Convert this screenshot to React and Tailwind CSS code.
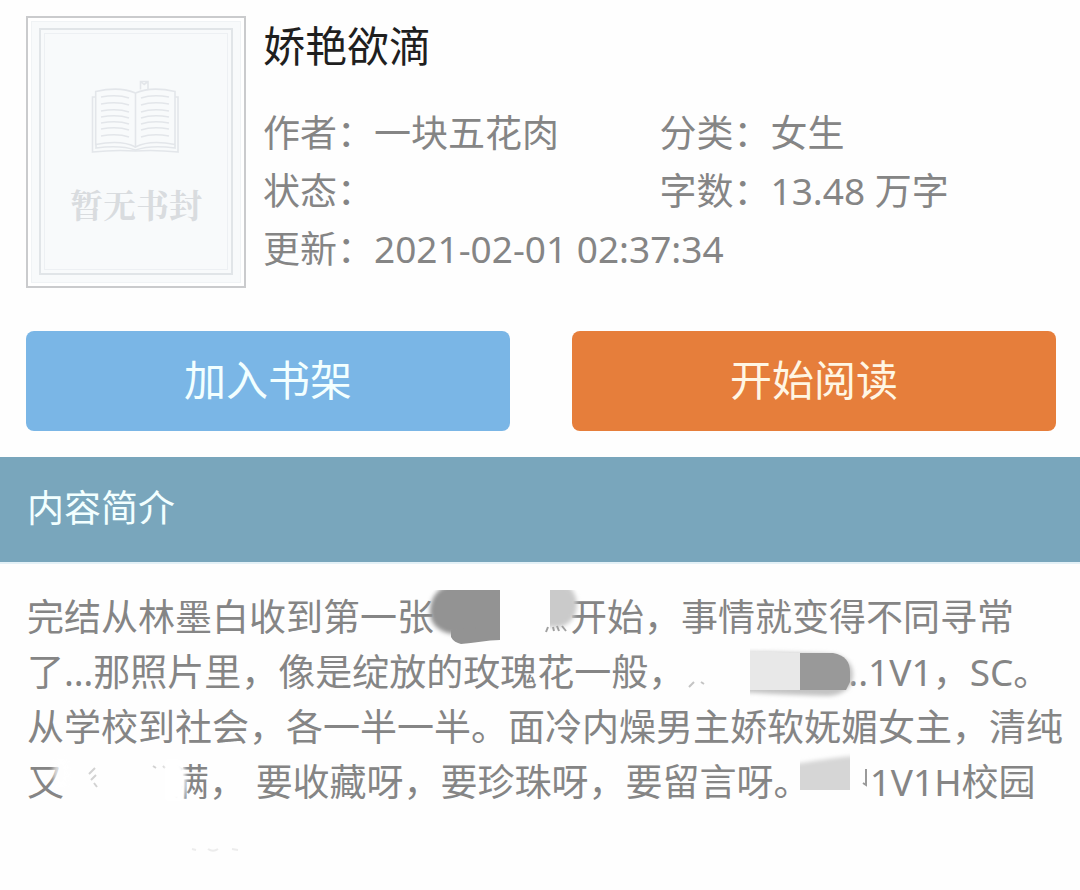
/* ── Book data ── */
const BOOK = {
  title: '娇艳欲滴',
  intro: '内容简介',
  meta: [
    { label: '作者', value: '一块五花肉' },
    { label: '分类', value: '女生' },
    { label: '状态', value: '' },
    { label: '字数', value: '13.48 万字' },
    { label: '更新', value: '2021-02-01 02:37:34', wide: true },
  ],
};

const PAGE_LINES = [16, 23, 30, 36, 42, 48, 55];

/* ── Open book drawing on the placeholder cover ── */
const BookIcon = () => (
  <svg
    viewBox="0 0 90 74"
    className="w-[90px] h-[74px]"
    fill="none"
    stroke="#e3e6ea"
    strokeWidth="1.6"
    aria-hidden="true"
  >
    <path d="M4.500 17H1.500v55c14-1.500 28-2 43-1 14-1 28-.5 42.500 1V17h-3" />
    <path d="M44.500 13C33 8 18 8.500 4.700 11.500v53C18 62 34 61.500 44.500 67" />
    <path d="M44.500 13C56 8 71 8.500 84 11.500v53C71 62 55 61.500 44.500 67V13" />
    <path d="M5 65v3c14-2 28-2 39.500 2C56 66 70 66 84 68v-3" />
    <path d="M49.500 9.500V1.500h7.500v7.500M49.500 1.500l3.700 3L57 1.500" />
    {PAGE_LINES.map((y) => (
      <path key={y} d={`M10 ${y + 1}c9-1.500 19-2 28 1M50 ${y + 2}c9-3 19-2.500 28-1`} />
    ))}
  </svg>
);

/* ── Placeholder cover ── */
const Cover = () => (
  <div className="shrink-0 w-[220px] h-[272px] border-2 border-[#cacbcd] bg-white p-[3px]">
    <div className="h-full border border-[#f0f3f5] bg-[#f8fafb] px-[7px] pt-[6px] pb-[7px]">
      <div className="h-full border-2 border-[#e1e5e8] p-[3px]">
        <div className="h-full border border-[#edf0f3] flex flex-col items-center pt-[46px]">
          <BookIcon />
          <span className="mt-[26px] text-[33px] leading-[48px] font-bold text-[#d9dcdf] whitespace-nowrap font-['Noto_Serif_CJK_SC','Noto_Sans_CJK_SC',serif]">
            暂无书封
          </span>
        </div>
      </div>
    </div>
  </div>
);

/* ── Brush marks sitting between the words of the intro ── */
const Mark = ({ width, children }) => (
  <svg
    width={width}
    height="55"
    className="relative inline-block align-top overflow-visible"
    aria-hidden="true"
  >
    <g transform="translate(1 1)">{children}</g>
  </svg>
);

const Description = () => (
  <p className="pl-[27px] pr-3 pt-[25px] text-[37px] leading-[55px] text-[#858585]">
    <svg className="absolute w-0 h-0" aria-hidden="true">
      <defs>
        <filter id="soft" x="-30%" y="-30%" width="160%" height="160%">
          <feGaussianBlur stdDeviation="2" />
        </filter>
        <clipPath id="left-a">
          <rect x="-15" y="0" width="80" height="60" />
        </clipPath>
        <clipPath id="right-a">
          <rect x="115" y="0" width="40" height="60" />
        </clipPath>
        <clipPath id="b">
          <rect x="64" y="-5" width="120" height="60" />
        </clipPath>
        <clipPath id="c">
          <rect x="-12" y="-10" width="50" height="45" />
        </clipPath>
      </defs>
    </svg>
    完结从林墨白收到第一张
    <Mark width={136}>
      <g clipPath="url(#left-a)">
        <path d="M70-6H22C4-5-5 7-5 22c0 12 9 20 22 22h53z" fill="#939393" filter="url(#soft)" />
        <path d="M16 40v7c2 4 6 6 10 7 13-1 26-4 39-4V36z" fill="#939393" />
      </g>
      <g clipPath="url(#right-a)">
        <path d="M108-8h16c11 2 18 12 18 23 0 12-8 20-17 22h-17z" fill="#cacaca" filter="url(#soft)" />
      </g>
      <path d="M113 37l-2 5M118 37l1 4M122 36l2 5M127 36l4 5" stroke="#a0a0a0" strokeWidth="2" />
    </Mark>
    开始，事情就变得不同寻常
    <br />
    了…那照片里，像是绽放的玫瑰花一般，
    <Mark width={163}>
      <path d="M8 37l-5 5M15 37l3 2" stroke="#c4c4c4" strokeWidth="2" />
      <g clipPath="url(#b)">
        <path
          d="M55 7c30 0 64 1 90 2 14 1 22 10 22 20 0 13-9 21-25 22-28-1-60-2-87-4z"
          fill="#c3c3c3"
          filter="url(#soft)"
        />
        <path d="M64 6l50 2v37H64z" fill="#e8e8e8" />
        <path d="M114 8h33c12 2 17 9 17 19v10l-4 8h-46z" fill="#999999" />
      </g>
    </Mark>
    ..1V1，SC。
    <br />
    从学校到社会，各一半一半。面冷内燥男主娇软妩媚女主，清纯
    <br />
    又
    <Mark width={108}>
      <ellipse cx="-4" cy="18" rx="8" ry="16" fill="#ffffff" opacity="0.7" filter="url(#soft)" />
      <path
        d="M30 13l-6 6M31 20l-5 5M29 28l3 4M88 11l3 2M98 11l2 2"
        stroke="#d2d2d2"
        strokeWidth="2"
      />
      <path d="M100 4h14c8 8 9 26 4 42h-18z" fill="#ffffff" filter="url(#soft)" />
    </Mark>
    满，{' '}要收藏呀，要珍珠呀，要留言呀。
    <Mark width={59}>
      <g clipPath="url(#c)">
        <path d="M-18 9C0 7 20 2 45 1v45h-63z" fill="#d6d6d6" filter="url(#soft)" />
      </g>
      <path d="M54 14v16l-3-2" fill="none" stroke="#9a9a9a" strokeWidth="2" />
    </Mark>
    1V1H校园
    <br />
    <Mark width={240}>
      <path
        d="M164 39l4 1M180 39c3 2 7 2 10 0M204 39l6 1"
        fill="none"
        stroke="#ececec"
        strokeWidth="2"
      />
    </Mark>
  </p>
);

/* ══ MAIN PAGE ══ */
const App = () => (
  <main
    lang="zh-CN"
    className="min-h-screen bg-[#fefefe] font-['Noto_Sans','Noto_Sans_CJK_SC',sans-serif]"
  >
    {/* ── Cover and details ── */}
    <section className="flex gap-[17px] pl-[26px] pr-6 pt-4">
      <Cover />
      <div className="flex-1 min-w-0">
        <h1 className="text-[42px] leading-[60px] text-[#1f1f1f]">{BOOK.title}</h1>
        <dl className="mt-7 grid grid-cols-2 text-[37px] leading-[58px] text-[#858585] whitespace-nowrap">
          {BOOK.meta.map((item) => (
            <div key={item.label} className={item.wide ? 'col-span-2 flex' : 'flex'}>
              <dt>{item.label}：</dt>
              <dd>{item.value}</dd>
            </div>
          ))}
        </dl>
      </div>
    </section>

    {/* ── Actions ── */}
    <div className="grid grid-cols-2 gap-[62px] pl-[26px] pr-6 mt-[43px] text-[42px]">
      <button type="button" className="h-[100px] pb-1 rounded-lg bg-[#7ab6e6] text-[#f2ffff]">
        加入书架
      </button>
      <button type="button" className="h-[100px] pb-1 rounded-lg bg-[#e67e3b] text-[#fff6e4]">
        开始阅读
      </button>
    </div>

    {/* ── Introduction ── */}
    <section className="mt-[26px]">
      <h2 className="border-b-2 border-[#e4f1f7] bg-[#79a6bc] bg-clip-padding px-[27px] pt-[22px] pb-[26px] text-[37px] leading-[57px] text-[#f2ffff]">
        {BOOK.intro}
      </h2>
      <Description />
    </section>
  </main>
);

export default App;
